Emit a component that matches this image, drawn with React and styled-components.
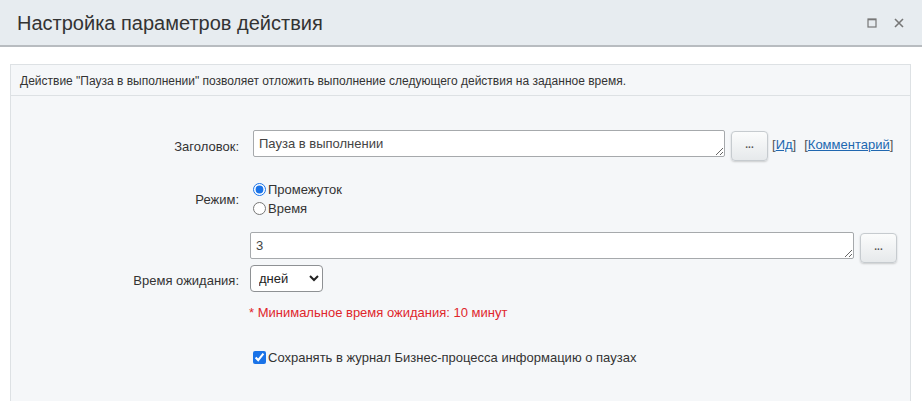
import React from "react";
import styled, { createGlobalStyle } from "styled-components";

const Global = createGlobalStyle`
  html, body { margin: 0; padding: 0; background: #fff; }
  body { font-family: "Liberation Sans", Arial, sans-serif; color: #333; }
`;

const Dialog = styled.div`
  width: 922px;
  height: 401px;
  overflow: hidden;
  background: #fff;
`;

const Header = styled.div`
  height: 47px;
  background: #e7ecf0;
  border-bottom: 2px solid #b8bcc0;
  display: flex;
  align-items: center;
  padding: 0 18px 0 17px;
  box-sizing: border-box;
`;

const Title = styled.h1`
  flex: 1;
  margin: 0;
  font-size: 20px;
  font-weight: normal;
  color: #333;
  padding-top: 2px;
`;

const HeadIcons = styled.div`
  display: flex;
  align-items: center;
  gap: 17px;
  color: #777;
`;

const Body = styled.div`
  padding: 17px 10px 0 10px;
`;

const Panel = styled.div`
  border: 1px solid #dde1e4;
  background: #f5f7f9;
  height: 360px;
  margin-right: 1px;
`;

const Note = styled.div`
  font-size: 12px;
  color: #333;
  padding: 9px 9px;
  border-bottom: 1px solid #dde1e4;
  height: 31px;
  box-sizing: border-box;
`;

const Form = styled.div`
  display: grid;
  grid-template-columns: 228px 1fr;
  column-gap: 10px;
  padding-top: 34px;
  font-size: 13px;
`;

const Label = styled.div`
  text-align: right;
  padding-top: ${(p) => p.$top || 0}px;
`;

const Field = styled.div`
  display: flex;
  align-items: ${(p) => p.$align || "flex-start"};
  gap: 6px;
  margin-bottom: ${(p) => p.$mb || 0}px;
  padding-left: ${(p) => p.$pl || 0}px;
`;

const Area = styled.textarea`
  width: ${(p) => p.$w}px;
  height: 27px;
  box-sizing: border-box;
  border: 1px solid #a6a9ac;
  border-radius: 2px;
  font: 13px "Liberation Sans", Arial, sans-serif;
  color: #444;
  padding: 5px 5px;
  resize: both;
  background: #fff;
  margin: 0;
`;

const DotsButton = styled.button`
  width: 37px;
  height: 30px;
  margin-top: 1px;
  border: 1px solid #c6cbcf;
  border-radius: 4px;
  background: linear-gradient(#fbfcfc, #e6e9eb);
  box-shadow: 0 1px 2px rgba(0, 0, 0, 0.18);
  font: bold 10px "Liberation Sans", Arial, sans-serif;
  color: #555;
  padding: 0 0 4px;
`;

const Links = styled.div`
  display: flex;
  gap: 8px;
  padding-top: 7px;
  color: #555;
  font-size: 13px;
  margin-left: -2px;
`;

const Link = styled.a`
  color: #2067b0;
  text-decoration: underline;
`;

const Radios = styled.div`
  display: flex;
  flex-direction: column;
  gap: 4px;
  margin-bottom: 16px;
`;

const Option = styled.label`
  display: flex;
  align-items: center;
  gap: 1px;
  font-size: 13px;
  color: #333;
  input { margin: 0 1px 0 4px; width: 13px; height: 13px; accent-color: #1a73e8; }
`;

const Select = styled.select`
  width: 73px;
  height: 27px;
  border: 1px solid #8e9194;
  border-radius: 4px;
  font: 13px "Liberation Sans", Arial, sans-serif;
  background: #fff;
  color: #222;
  padding: 0 4px;
`;

const Warn = styled.div`
  color: #e0262b;
  font-size: 13px;
  margin-top: 13px;
`;

const Check = styled.label`
  display: flex;
  align-items: center;
  gap: 2px;
  margin-top: 30px;
  font-size: 13px;
  color: #333;
  input { margin: 0 0 0 4px; width: 13px; height: 13px; accent-color: #1a73e8; }
`;

export default function App() {
  return (
    <Dialog>
      <Global />
      <Header>
        <Title>Настройка параметров действия</Title>
        <HeadIcons>
          <svg width="10" height="10" viewBox="0 0 10 10">
            <rect x="1" y="1" width="8" height="8" fill="none" stroke="#777" strokeWidth="1.2" />
            <line x1="1" y1="1.6" x2="9" y2="1.6" stroke="#777" strokeWidth="1.4" />
          </svg>
          <svg width="10" height="10" viewBox="0 0 10 10">
            <path d="M1 1 L9 9 M9 1 L1 9" stroke="#777" strokeWidth="1.6" />
          </svg>
        </HeadIcons>
      </Header>
      <Body>
        <Panel>
          <Note>Действие "Пауза в выполнении" позволяет отложить выполнение следующего действия на заданное время.</Note>
          <Form>
            <Label $top={9}>Заголовок:</Label>
            <Field $mb={21} $pl={4}>
              <Area $w={472} defaultValue="Пауза в выполнении" />
              <DotsButton>...</DotsButton>
              <Links>
                <span>[<Link>Ид</Link>]</span>
                <span>[<Link>Комментарий</Link>]</span>
              </Links>
            </Field>

            <Label $top={10}>Режим:</Label>
            <Radios>
              <Option><input type="radio" name="m" defaultChecked />Промежуток</Option>
              <Option><input type="radio" name="m" />Время</Option>
            </Radios>

            <div />
            <Field $mb={2} $pl={1}>
              <Area $w={604} defaultValue="3" />
              <DotsButton>...</DotsButton>
            </Field>

            <Label $top={8}>Время ожидания:</Label>
            <Field $pl={1}>
              <Select defaultValue="d">
                <option value="d">дней</option>
                <option value="h">часов</option>
                <option value="m">минут</option>
              </Select>
            </Field>

            <div />
            <Warn>* Минимальное время ожидания: 10 минут</Warn>

            <div />
            <Check><input type="checkbox" defaultChecked />Сохранять в журнал Бизнес-процесса информацию о паузах</Check>
          </Form>
        </Panel>
      </Body>
    </Dialog>
  );
}
